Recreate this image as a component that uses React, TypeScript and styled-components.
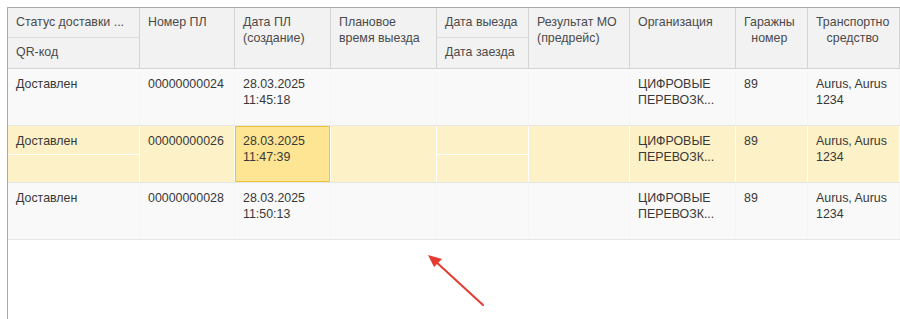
import React from "react";
import styled, { createGlobalStyle } from "styled-components";

const GlobalStyle = createGlobalStyle`
  *, *::before, *::after {
    box-sizing: border-box;
  }
  html, body {
    margin: 0;
    padding: 0;
    background: #fff;
  }
  body {
    font-family: "Liberation Sans", Arial, sans-serif;
    font-size: 12.4px;
    color: #333;
  }
`;

const COLS = "132px 95px 96px 106px 92px 101px 106px 72px 1fr";

type Column = {
  title: string[];
  sub?: string[];
  center?: boolean;
};

const columns: Column[] = [
  { title: ["Статус доставки ..."], sub: ["QR-код"] },
  { title: ["Номер ПЛ"] },
  { title: ["Дата ПЛ", "(создание)"] },
  { title: ["Плановое", "время выезда"] },
  { title: ["Дата выезда"], sub: ["Дата заезда"] },
  { title: ["Результат МО", "(предрейс)"] },
  { title: ["Организация"] },
  { title: ["Гаражны", "номер"], center: true },
  { title: ["Транспортно", "средство"], center: true },
];

type Row = {
  status: string;
  number: string;
  date: string;
  time: string;
  selected?: boolean;
};

const rows: Row[] = [
  { status: "Доставлен", number: "00000000024", date: "28.03.2025", time: "11:45:18" },
  { status: "Доставлен", number: "00000000026", date: "28.03.2025", time: "11:47:39", selected: true },
  { status: "Доставлен", number: "00000000028", date: "28.03.2025", time: "11:50:13" },
];

const Page = styled.div`
  position: relative;
  height: 319px;
  padding: 7px 0 0 7px;
  overflow: hidden;
`;

const Table = styled.div`
  height: 100%;
  border-left: 1px solid #a9a9a9;
  border-top: 1px solid #a9a9a9;
  background: #fff;
`;

const HeaderRow = styled.div`
  display: grid;
  grid-template-columns: ${COLS};
  height: 61px;
  background: #f2f2f2;
  border-bottom: 1px solid #d4d4d4;
  color: #4a4a4a;
`;

const HeaderCol = styled.div`
  display: flex;
  flex-direction: column;
  border-right: 1px solid #d4d4d4;
  min-width: 0;
`;

const HeadCell = styled.div<{ $split?: boolean }>`
  flex: ${(p) => (p.$split ? "0 0 30px" : "1")};
  padding: 6px 0 0 8px;
  line-height: 16px;
  white-space: nowrap;
  overflow: hidden;
  border-bottom: ${(p) => (p.$split ? "1px solid #dcdcdc" : "none")};
`;

const SubHeadCell = styled.div`
  flex: 1;
  padding: 6px 0 0 8px;
  line-height: 16px;
  white-space: nowrap;
  overflow: hidden;
`;

const Centered = styled.span`
  display: inline-block;
  text-align: center;
`;

const BodyRow = styled.div<{ $selected?: boolean }>`
  display: grid;
  grid-template-columns: ${COLS};
  height: 57px;
  background: ${(p) => (p.$selected ? "#fdf1c7" : "#f9f9f9")};
  border-bottom: 1px solid #e6e6e6;
  color: #383838;
`;

const Cell = styled.div<{ $selected?: boolean; $focused?: boolean }>`
  display: flex;
  flex-direction: column;
  min-width: 0;
  border-right: 1px solid ${(p) => (p.$selected ? "#ffffff" : "#f6f6f6")};
  background: ${(p) => (p.$focused ? "#fee593" : "transparent")};
  box-shadow: ${(p) => (p.$focused ? "inset 0 0 0 1px #f2c23c" : "none")};
`;

const CellTop = styled.div<{ $split?: boolean; $selected?: boolean }>`
  flex: ${(p) => (p.$split ? "0 0 29px" : "1")};
  padding: 7px 0 0 8px;
  line-height: 16px;
  white-space: nowrap;
  overflow: hidden;
  border-bottom: ${(p) =>
    p.$split && p.$selected ? "1px solid #ffffff" : "1px solid transparent"};
`;

const Arrow = styled.svg`
  position: absolute;
  left: 0;
  top: 0;
  pointer-events: none;
`;

function lines(items: string[]) {
  return items.map((t, i) => (
    <React.Fragment key={i}>
      {i > 0 && <br />}
      {t}
    </React.Fragment>
  ));
}

export default function App() {
  return (
    <>
      <GlobalStyle />
      <Page>
        <Table>
          <HeaderRow>
            {columns.map((c, i) => (
              <HeaderCol key={i}>
                <HeadCell $split={!!c.sub}>
                  {c.center ? <Centered>{lines(c.title)}</Centered> : lines(c.title)}
                </HeadCell>
                {c.sub && <SubHeadCell>{lines(c.sub)}</SubHeadCell>}
              </HeaderCol>
            ))}
          </HeaderRow>
          {rows.map((r, ri) => {
            const values: string[][] = [
              [r.status],
              [r.number],
              [r.date, r.time],
              [],
              [],
              [],
              ["ЦИФРОВЫЕ", "ПЕРЕВОЗК..."],
              ["89"],
              ["Aurus, Aurus", "1234"],
            ];
            return (
              <BodyRow key={ri} $selected={r.selected}>
                {columns.map((c, ci) => (
                  <Cell key={ci} $selected={r.selected} $focused={r.selected && ci === 2}>
                    <CellTop $split={!!c.sub} $selected={r.selected}>
                      {lines(values[ci])}
                    </CellTop>
                  </Cell>
                ))}
              </BodyRow>
            );
          })}
        </Table>
        <Arrow width="900" height="319" viewBox="0 0 900 319">
          <line x1="483" y1="305" x2="434" y2="260" stroke="#e53a30" strokeWidth="2" strokeLinecap="round" />
          <polygon points="428,255 442,259 434,267" fill="#e53a30" />
        </Arrow>
      </Page>
    </>
  );
}
